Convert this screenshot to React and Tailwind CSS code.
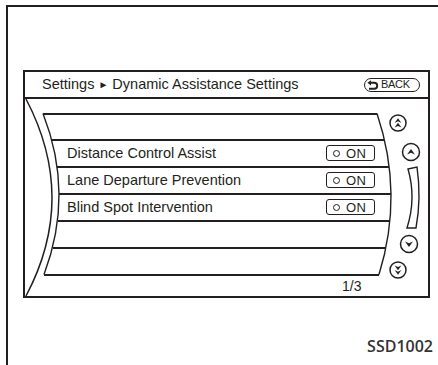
import React from 'react'

const ink = '#231f20'

function Dart({ cx, cy, s = 1 }) {
  return (
    <path
      d={`M${cx - 3.6 * s} ${cy + 2.2 * s} L${cx} ${cy - 2.8 * s} L${cx + 3.6 * s} ${cy + 2.2 * s} L${cx} ${cy + 0.6 * s} Z`}
      fill={ink}
    />
  )
}

function Overlay() {
  return (
    <svg
      className="pointer-events-none absolute left-0 top-0"
      width="438"
      height="365"
      viewBox="0 0 438 365"
      fill="none"
    >
      {/* curved screen edges */}
      <path d="M26 99 Q78 198 26 296" stroke={ink} strokeWidth="1.5" />
      <path d="M43 113.5 Q74.5 194 44 274.5" stroke={ink} strokeWidth="1.4" />
      <path d="M377 113.5 Q404 194 379 274.5" stroke={ink} strokeWidth="1.4" />

      {/* double up */}
      <circle cx="398" cy="123" r="8" stroke={ink} strokeWidth="1.5" />
      <Dart cx={398} cy={120.8} s={0.95} />
      <Dart cx={398} cy={125.4} s={0.95} />

      {/* up */}
      <circle cx="411" cy="152" r="8.5" stroke={ink} strokeWidth="1.5" />
      <Dart cx={411} cy={152} s={1.1} />

      {/* scroll bar */}
      <path d="M408 169 L417 167 Q421.5 198 416 228 L407 228 Q416.5 198 408 169 Z" stroke={ink} strokeWidth="1.4" />

      {/* down */}
      <circle cx="409" cy="244" r="8.5" stroke={ink} strokeWidth="1.5" />
      <g transform="rotate(180 409 244)">
        <Dart cx={409} cy={244} s={1.1} />
      </g>

      {/* double down */}
      <circle cx="398" cy="270" r="8" stroke={ink} strokeWidth="1.5" />
      <g transform="rotate(180 398 270)">
        <Dart cx={398} cy={267.8} s={0.95} />
        <Dart cx={398} cy={272.4} s={0.95} />
      </g>
    </svg>
  )
}

function BackIcon() {
  return (
    <svg width="12" height="10" viewBox="0 0 12 10" fill="none">
      <path d="M0.4 2.8 L4 0.2 L4 5.4 Z" fill={ink} />
      <path d="M3.5 2.8 H7.2 A3 3 0 0 1 7.2 8.8 H2" stroke={ink} strokeWidth="1.9" />
    </svg>
  )
}

function OnButton() {
  return (
    <div className="ml-auto mr-[53px] flex h-[16px] w-[49px] items-center rounded-[3px] border-[1.5px] border-[#231f20] pl-[6px]">
      <span className="h-[7px] w-[7px] rounded-full border-[1.5px] border-[#231f20]" />
      <span className="ml-[6px] text-[13px] leading-none tracking-[0.3px]">ON</span>
    </div>
  )
}

const Line = ({ className }) => <div className={`h-[1.5px] shrink-0 bg-[#231f20] ${className}`} />

function Row({ label, first }) {
  return (
    <div className={`flex shrink-0 items-center pl-[42px] ${first ? 'h-[24.5px]' : 'h-[25.5px]'}`}>
      {label && <span className="text-[14.5px] leading-none">{label}</span>}
      {label && <OnButton />}
    </div>
  )
}

export default function App() {
  return (
    <div className="relative h-[365px] w-[438px] overflow-hidden bg-white pl-[6px] pt-[5px] font-['Liberation_Sans',Arial,sans-serif] text-[#231f20]">
      <div className="h-full border-l-2 border-t-2 border-[#231f20]">
        {/* screen */}
        <div className="ml-[15px] mt-[63px] flex h-[228px] w-[407px] flex-col border-2 border-[#231f20]">
          <div className="flex h-[27px] shrink-0 items-center justify-between border-b-2 border-[#231f20] pl-[17px] pr-[8px]">
            <span className="text-[14.5px] leading-none">
              Settings <span className="text-[10px] align-[1px]">►</span> Dynamic Assistance Settings
            </span>
            <div className="flex h-[14px] w-[56px] items-center gap-[2px] rounded-full border-[1.5px] border-[#231f20] pl-[2px]">
              <BackIcon />
              <span className="text-[11px] leading-none tracking-[-0.3px]">BACK</span>
            </div>
          </div>

          <div className="h-[14px] shrink-0" />
          <Line className="ml-[18px] mr-[51px]" />
          <Row first />
          <Line className="ml-[27px] mr-[44px]" />
          <Row label="Distance Control Assist" />
          <Line className="ml-[32px] mr-[39px]" />
          <Row label="Lane Departure Prevention" />
          <Line className="ml-[34px] mr-[37px]" />
          <Row label="Blind Spot Intervention" />
          <Line className="ml-[33px] mr-[38px]" />
          <Row />
          <Line className="ml-[28px] mr-[42px]" />
          <Row />
          <Line className="ml-[19px] mr-[49px]" />

          <div className="flex flex-1 items-center pl-[317px] pt-[1px]">
            <span className="text-[14px] leading-none">1/3</span>
          </div>
        </div>

        <div className="mt-[37px] flex justify-end pr-[5px]">
          <span className="font-['Open_Sans',sans-serif] text-[16px] font-semibold leading-[22px] text-[#333]">SSD1002</span>
        </div>
      </div>
      <Overlay />
    </div>
  )
}
